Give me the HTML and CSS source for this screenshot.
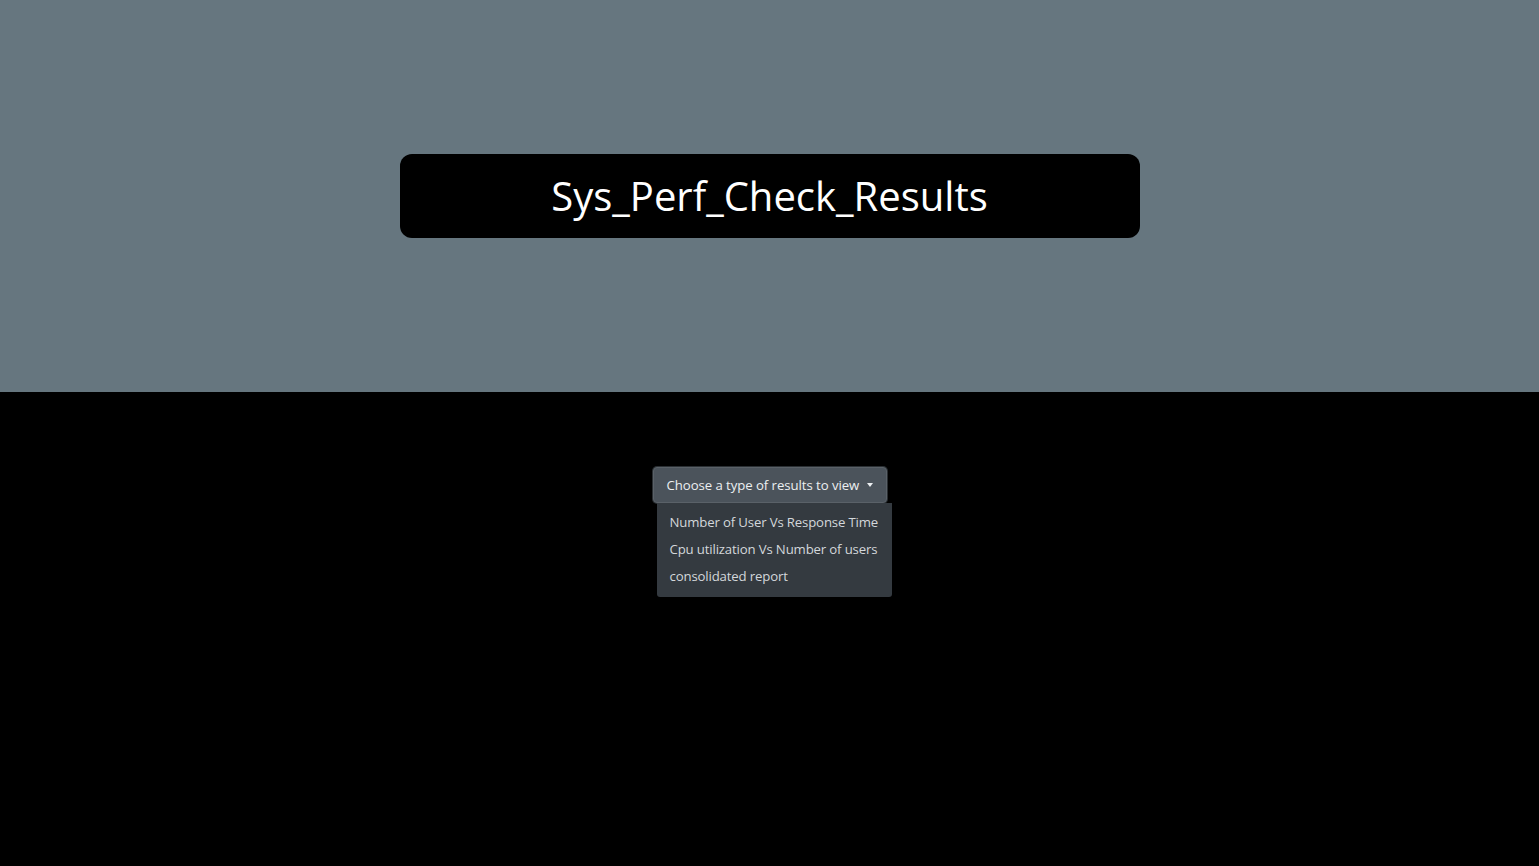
FILE: index.html
```html
<!DOCTYPE html>
<html lang="en">
<head>
<meta charset="utf-8">
<title>Sys_Perf_Check_Results</title>
<link rel="stylesheet" href="styles.css">
</head>
<body>
  <header class="hero">
    <div class="title-box">
      <h1 class="title">Sys_Perf_Check_Results</h1>
    </div>
  </header>
  <main class="content">
    <div class="dropdown">
      <button class="dropdown-toggle" type="button"><span class="toggle-label">Choose a type of results to view</span><span class="caret"></span></button>
      <ul class="dropdown-menu">
        <li class="dropdown-item">Number of User Vs Response Time</li>
        <li class="dropdown-item">Cpu utilization Vs Number of users</li>
        <li class="dropdown-item">consolidated report</li>
      </ul>
    </div>
  </main>
</body>
</html>
```

FILE: styles.css
```css
* { box-sizing: border-box; }
html, body { margin: 0; padding: 0; }
body {
  background: #000;
  font-family: "Open Sans", "Noto Sans", sans-serif;
  min-height: 866px;
}
.hero {
  height: 392px;
  background: #66767f;
  display: flex;
  align-items: center;
  justify-content: center;
}
.title-box {
  width: 740px;
  height: 84px;
  background: #000;
  border-radius: 12px;
  display: flex;
  align-items: center;
  justify-content: center;
}
.title {
  margin: 0;
  color: #fff;
  font-weight: 400;
  font-size: 40px;
  letter-spacing: 0;
  line-height: 1;
}
.content {
  display: flex;
  justify-content: center;
  padding-top: 75px;
}
.dropdown {
  position: relative;
}
.dropdown-toggle {
  display: flex;
  align-items: center;
  justify-content: space-between;
  height: 36px;
  width: 234px;
  padding: 0 13px 0 13px;
  background: #4b535b;
  border: 1px solid #5a6168;
  border-radius: 4px;
  color: #eceff1;
  font-family: inherit;
  font-size: 13.2px;
  cursor: pointer;
  box-shadow: 0 0 0 1px #2a2f33;
  white-space: nowrap;
}
.toggle-label {
  letter-spacing: -0.06px;
}
.caret {
  display: inline-block;
  border-top: 4px solid #eceff1;
  border-left: 3.5px solid transparent;
  border-right: 3.5px solid transparent;
}
.dropdown-menu {
  position: absolute;
  top: 36px;
  left: 4px;
  width: 235px;
  margin: 0;
  padding: 6px 0 7px;
  list-style: none;
  background: #343a40;
  border-radius: 0 0 3px 3px;
}
.dropdown-item {
  padding: 0 0 0 13px;
  height: 27px;
  line-height: 27px;
  color: #d3d7db;
  font-size: 13.2px;
  letter-spacing: -0.15px;
  white-space: nowrap;
}
```
